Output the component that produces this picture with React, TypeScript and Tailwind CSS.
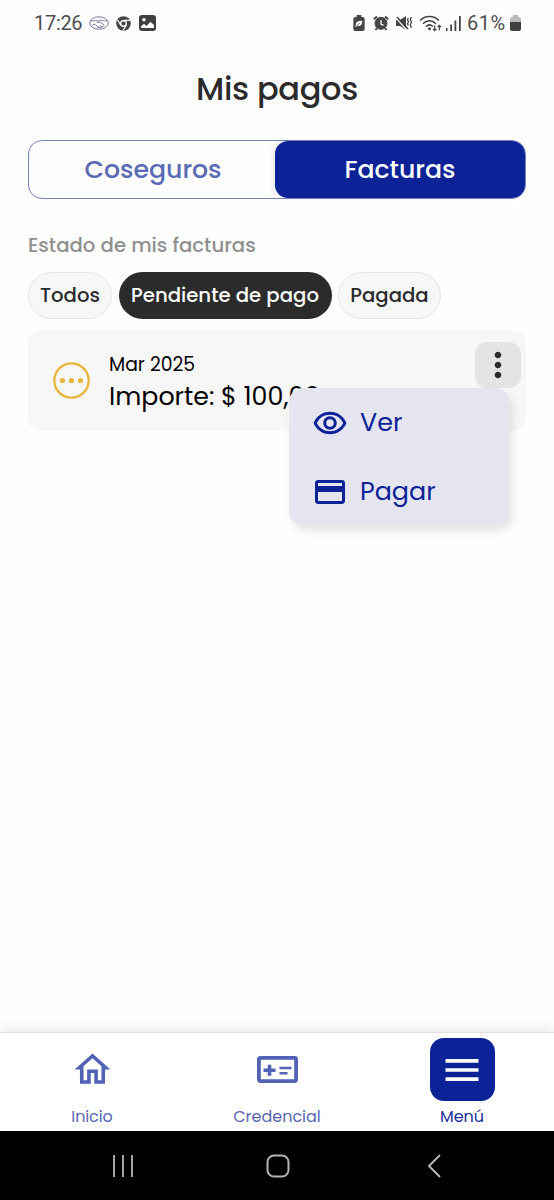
import { useState } from 'react';
import { MdMenu, MdMoreVert, MdOutlineCreditCard, MdOutlineHome, MdOutlineRemoveRedEye } from 'react-icons/md';

const filters = [
    { name: "Todos", width: "w-[84px]" },
    { name: "Pendiente de pago", width: "w-[213px]" },
    { name: "Pagada", width: "w-[103px]" },
]

function StatusBar() {
    return (
        <div className="flex h-[46px] items-center justify-between pl-[34px] pr-[33px] text-[#4d4d4d] font-[Roboto,sans-serif]">
            <div className="flex items-center">
                <span className="w-[55px] text-[20px] leading-[20px] tracking-[-0.3px]">17:26</span>
                <svg width="20" height="14" viewBox="0 0 20 14" fill="none" stroke="#6a6a90" strokeWidth=".9">
                    <ellipse cx="10" cy="7" rx="9.300" ry="6.200" />
                    <path d="M1.500 4.500c3 1 4.500-.3 6.500 0M18.500 4.500c-3 1.300-5-.8-8-.3L8 6.200c1 1 2.500-.5 3.500 0l4 3M3 9.500c3-2.500 3.500-.5 5 .5 1.500 2.200 4.500 2.200 7-.3M9 10.500l1.500 1M11 9.500l1.800 1.300" />
                </svg>
                <svg className="ml-[7px]" width="15" height="15" viewBox="0 0 16 16">
                    <circle cx="8" cy="8" r="7.800" fill="#454545" />
                    <circle cx="8" cy="8" r="3" fill="#454545" stroke="#fff" strokeWidth="1.500" />
                    <path d="M8 4.600h7M5 9.700 1.600 4M11 9.700 7.500 15.500" stroke="#fff" strokeWidth="1.200" />
                </svg>
                <svg className="ml-[8px]" width="17" height="16" viewBox="0 0 17 16">
                    <rect width="17" height="16" rx="3" fill="#404040" />
                    <circle cx="5" cy="4.800" r="1.700" fill="#fff" />
                    <path d="M2 13V11.500L5 8.800l2.500 2.200L11.500 6.800 15 10v3z" fill="#fff" />
                </svg>
            </div>
            <div className="flex items-center">
                <svg width="12" height="16" viewBox="0 0 12 17">
                    <path d="M3.500 0h5v2H10a2 2 0 0 1 2 2v11a2 2 0 0 1-2 2H2a2 2 0 0 1-2-2V4a2 2 0 0 1 2-2h1.500z" fill="#454545" />
                    <path d="M9.500 6C5 6 2.500 7 2.700 10.500L2 12.800h1l.7-1.300C8 12.500 9.500 10 9.500 6z" fill="#fff" />
                    <path d="M3.500 11.500 7 8.500" stroke="#454545" strokeWidth=".8" />
                </svg>
                <svg className="ml-[8px]" width="16" height="16" viewBox="0 0 16 16" fill="none" stroke="#454545">
                    <circle cx="8" cy="8.300" r="6" fill="#454545" />
                    <path d="M.8 4.200 4 1.500M15.200 4.200 12 1.500M4 13l-1.500 2M12 13l1.500 2" strokeWidth="2" />
                    <path d="M8 5v4l2.500 1.300" stroke="#fff" strokeWidth="1.300" />
                </svg>
                <svg className="ml-[7px]" width="17" height="16" viewBox="0 0 17 16" fill="none" stroke="#454545">
                    <path d="M0 5h4l6-4v14l-6-4H0z" fill="#454545" stroke="none" />
                    <path d="M0 2.800 10.500 15" stroke="#fff" strokeWidth="1.200" />
                    <path d="M1 2 12 14" strokeWidth="1.500" />
                    <path d="M12.300 3l-.8 1.800 1 2-1 2 .8 1.700M15.300 2l-1 2.500 1.200 2.500-1.200 2.500 1 3.500" strokeWidth="1.300" />
                </svg>
                <svg className="ml-[6px]" width="23" height="17" viewBox="0 0 23 17" fill="none" stroke="#454545" strokeWidth="1.500">
                    <path d="M1 5.500c5-5.500 14-5.500 19 0M4 8.700c3.800-4 9.200-4 13 0M7 11.700c2-2.100 4.800-2.200 7-.2" />
                    <circle cx="10.500" cy="13.800" r="1.500" fill="#454545" stroke="none" />
                    <path d="M15.700 10.500v5m-1.800-1.600 1.800 1.800 1.800-1.800M20.300 15.500v-5m-1.800 1.600 1.800-1.800 1.800 1.800" strokeWidth="1.200" />
                </svg>
                <svg className="ml-[4px]" width="15" height="15" viewBox="0 0 15 15" fill="#454545">
                    <path d="M0 12h1.500v3H0zM4.200 8.500h1.800V15H4.200zM8.500 4.500h1.800V15H8.500zM13 0h1.800v15H13z" />
                </svg>
                <span className="ml-[6px] w-[43px] text-[20px] leading-[20px] tracking-[0.5px]">61%</span>
                <svg width="11" height="16" viewBox="0 0 11 16">
                    <path d="M3 0h5v2h1a2 2 0 0 1 2 2v4H0V4a2 2 0 0 1 2-2h1z" fill="#b9b9b9" />
                    <path d="M0 7h11v7a2 2 0 0 1-2 2H2a2 2 0 0 1-2-2z" fill="#404040" />
                </svg>
            </div>
        </div>
    )
}

function ActionsMenu() {
    return (
        <div className="absolute left-[261px] top-[58px] h-[137px] w-[220px] rounded-[14px] bg-[#e4e5f1] text-[25.4px] text-[#0c2297] shadow-[4px_6px_10px_rgba(0,0,0,0.10)]">
            <button className="flex h-[69px] w-full items-center pl-[23px]">
                <MdOutlineRemoveRedEye size="36" />
                <span className="ml-[12px]">Ver</span>
            </button>
            <button className="flex h-[69px] w-full items-center pl-[23px]">
                <MdOutlineCreditCard size="36" />
                <span className="ml-[12px]">Pagar</span>
            </button>
        </div>
    )
}

function BottomNav() {
    return (
        <nav className="flex h-[99px] justify-between border-t border-[#e2e2e2] bg-white px-[42px] text-[16px] leading-[20px] text-[#5866b2] shadow-[0_-2px_12px_rgba(0,0,0,0.10)]">
            <div className="flex w-[100px] flex-col items-center">
                <MdOutlineHome size="43" className="mt-[15px] h-[43px] text-[#5263b5]" />
                <span className="mt-[16px] tracking-[-0.1px]">Inicio</span>
            </div>
            <div className="flex w-[100px] flex-col items-center">
                <svg className="mt-[23px]" width="41" height="27" viewBox="0 0 41 27" fill="none" stroke="#5263b5">
                    <rect x="1.900" y="1.900" width="37.200" height="23.200" rx="1.500" strokeWidth="3.800" />
                    <path d="M6.500 14.300h12M12.500 8.800v11" strokeWidth="3.600" />
                    <path d="M22.500 12h12M22.500 17.200h8" strokeWidth="2.600" />
                </svg>
                <span className="mt-[24px]">Credencial</span>
            </div>
            <div className="flex w-[100px] flex-col items-center text-[#20319c]">
                <div className="mt-[5px] flex h-[63px] w-[65px] items-center justify-center rounded-[14px] bg-[#0c2297]">
                    <MdMenu size="44" className="text-white" />
                </div>
                <span className="mt-[6px]">Menú</span>
            </div>
        </nav>
    )
}

export default function App() {
    const [active, setActive] = useState("Pendiente de pago");
    const [open, setOpen] = useState(true);

    return (
        <div className="flex h-[1200px] w-[554px] flex-col overflow-hidden bg-[#fefefe] font-[Poppins,Inter,sans-serif]">
            <StatusBar />
            <main className="flex flex-1 flex-col px-[28px]">
                <h1 className="mt-[21px] text-center text-[32px] font-medium leading-[44px] tracking-[-0.3px] text-[#2b2b2b]">Mis pagos</h1>

                <div className="mt-[29px] flex h-[59px] rounded-[14px] border border-[#7782bd] text-[25.2px] font-medium">
                    <button className="flex-1 pl-[2px] text-[#5a6ab5]">Coseguros</button>
                    <button className="w-[250px] rounded-[13px] bg-[#0c2297] text-white shadow-[-3px_0_5px_rgba(0,0,0,0.08)]">Facturas</button>
                </div>

                <p className="mt-[34px] text-[19.7px] font-medium leading-[24px] text-[#8f8f8f]">Estado de mis facturas</p>

                <div className="mt-[15px] flex gap-[6.5px]">
                    {filters.map((item) => (
                        <button
                            key={item.name}
                            onClick={() => setActive(item.name)}
                            className={`h-[47px] shrink-0 whitespace-nowrap rounded-full text-[19.7px] font-medium ${item.width} ${active == item.name ? "bg-[#2b2b2b] text-white" : "border border-[#e4e4e4] bg-[#f7f7f7] text-[#2b2b2b]"}`}
                        >
                            {item.name}
                        </button>
                    ))}
                </div>

                <div className="relative mt-[11px] flex h-[101px] items-start rounded-[14px] bg-[#f7f7f7]">
                    <svg className="ml-[25px] mt-[32px] shrink-0" width="37" height="37" viewBox="0 0 37 37" fill="#e8b53a">
                        <circle cx="18.500" cy="18.500" r="17.200" fill="none" stroke="#e8b53a" strokeWidth="2.300" />
                        <circle cx="9.500" cy="18.500" r="2.600" />
                        <circle cx="18.500" cy="18.500" r="2.600" />
                        <circle cx="27.500" cy="18.500" r="2.600" />
                    </svg>
                    <div className="ml-[19px] mt-[23px] flex-1 text-black">
                        <p className="text-[18.8px] leading-[24px]">Mar 2025</p>
                        <p className="mt-[3px] text-[25.3px] leading-[32px]">Importe: $ 100,00</p>
                    </div>
                    <button onClick={() => setOpen(!open)} className="mr-[5px] mt-[12px] flex h-[46px] w-[46px] items-center justify-center rounded-[12px] bg-[#e4e4e4]">
                        <MdMoreVert size="40" className="text-[#2b2b2b]" />
                    </button>
                    {open && <ActionsMenu />}
                </div>
            </main>
            <BottomNav />
            <div className="flex h-[69px] shrink-0 items-center justify-between bg-black pl-[112px] pr-[112px]">
                <svg width="22" height="22" viewBox="0 0 22 22" stroke="#b5b5b5" strokeWidth="1.800">
                    <path d="M2 0v22M11 0v22M20 0v22" />
                </svg>
                <svg className="-ml-[4px]" width="24" height="24" viewBox="0 0 24 24" fill="none" stroke="#b5b5b5" strokeWidth="2">
                    <rect x="1.500" y="1.500" width="21" height="21" rx="6.500" />
                </svg>
                <svg width="16" height="24" viewBox="0 0 16 24" fill="none" stroke="#b5b5b5" strokeWidth="2">
                    <path d="M14 1 3 12l11 11" />
                </svg>
            </div>
        </div>
    );
}
